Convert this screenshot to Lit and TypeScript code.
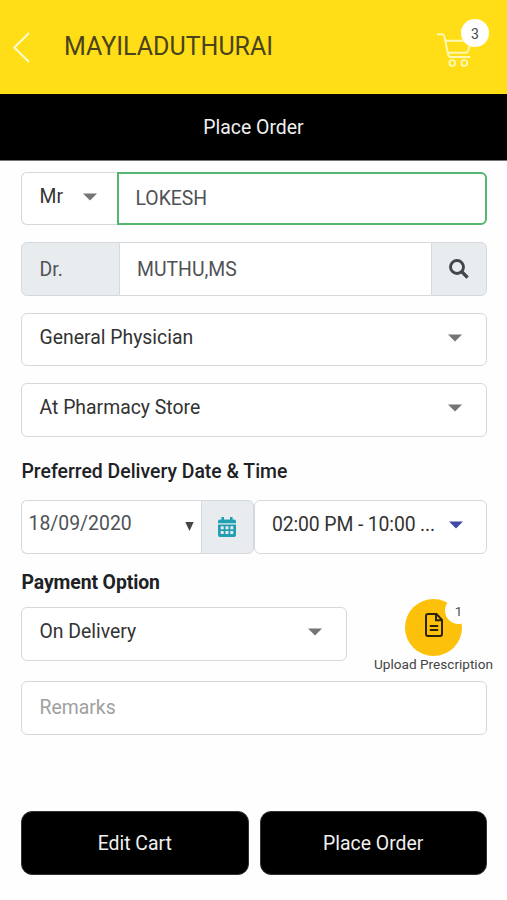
import { LitElement, html, css, svg } from "lit";
import { customElement } from "lit/decorators.js";

const calendarDots = [0, 1, 2].flatMap((col) =>
  [0, 1].map((row) => svg`<rect x=${2.7 + col * 4.8} y=${9.2 + row * 4.9} width="3" height="3" rx=".5" fill="#e9ecef"/>`)
);

@customElement("app-root")
export class AppRoot extends LitElement {
  static styles = css`
    :host {
      display: flex;
      flex-direction: column;
      width: 507px;
      height: 900px;
      overflow: hidden;
      background: #fefefe;
      color: #333;
      font: 19.4px/24px Roboto, sans-serif;
    }
    * { box-sizing: border-box; }
    svg { display: block; flex: none; }
    .header {
      flex: none;
      display: flex;
      height: 94px;
      padding: 0 18px 0 12px;
      background: #ffde17;
    }
    .back { margin-top: 31px; }
    .store {
      margin: 32px 0 0 33px;
      font-size: 25px;
      line-height: 30px;
      color: #4a431b;
      white-space: nowrap;
    }
    .cart { position: relative; margin: 32px 0 0 auto; width: 53px; }
    .count {
      position: absolute;
      left: 25px;
      top: -13px;
      width: 28px;
      height: 28px;
      border-radius: 50%;
      background: #fff;
      color: #484848;
      font-size: 14px;
      line-height: 30px;
      text-align: center;
    }
    .bar {
      flex: none;
      height: 67px;
      border-bottom: 1px solid #77757a;
      background: #000;
      color: #f0f0f0;
      line-height: 67px;
      text-align: center;
    }
    .form { display: flex; flex-direction: column; padding: 10.6px 20px 0 21px; }
    .row { display: flex; height: 53.6px; margin-bottom: 16.9px; }
    .box {
      display: flex;
      align-items: center;
      justify-content: space-between;
      border: 1.5px solid #d5d8dc;
      border-radius: 6px;
      padding: 0 24px 0 17.5px;
      background: #fff;
      white-space: nowrap;
    }
    .grow { flex: 1; min-width: 0; }
    .up { padding-bottom: 3px; }
    .input { color: #4f5256; padding-top: 1.6px; }
    .title { width: 96px; padding-right: 20.5px; border-right: 0; border-radius: 6px 0 0 6px; }
    .valid { border: 2px solid #55b672; border-radius: 0 6px 6px 0; padding-left: 16.5px; }
    .addon { background: #e9ecef; }
    .prefix { width: 98.5px; border-radius: 6px 0 0 6px; }
    .mid { border-width: 1.5px 0; border-radius: 0; padding-left: 17.5px; }
    .search { width: 56px; padding: 0 1px 0 0; justify-content: center; border-radius: 0 6px 6px 0; }
    .date { width: 179.5px; padding: 0 6.5px 6px 6.5px; border-right: 0; border-radius: 6px 0 0 6px; }
    .date svg { margin-top: 5px; }
    .calendar { width: 53.5px; padding: 0; justify-content: center; border-radius: 0 6px 6px 0; }
    .slot { letter-spacing: -0.13px; padding: 0 23.5px 4px 17px; }
    .heading { color: #202124; font-weight: 500; white-space: nowrap; }
    .when { margin: 6px 0 16.6px; padding-left: 0.5px; }
    .pay { margin: 1px 0 12.4px; padding-left: 0.5px; font-weight: 700; letter-spacing: -0.1px; }
    .dates { margin-bottom: 16.3px; }
    .payment { justify-content: space-between; margin-bottom: 20.4px; }
    .method { width: 326px; padding-bottom: 4px; }
    .upload { width: 120px; margin: -8.4px -6.5px 0 0; display: flex; flex-direction: column; align-items: center; }
    .disc {
      position: relative;
      flex: none;
      display: flex;
      align-items: center;
      justify-content: center;
      width: 57px;
      height: 57px;
      border-radius: 50%;
      background: #fdc10b;
    }
    .disc svg { margin-top: -6px; }
    .files {
      position: absolute;
      right: -10px;
      top: -2px;
      width: 27px;
      height: 27px;
      border-radius: 50%;
      background: #fefefe;
      color: #505050;
      font-size: 13.5px;
      line-height: 29px;
      text-align: center;
    }
    .caption { font-size: 13.6px; line-height: 17px; color: #444; white-space: nowrap; }
    .remarks { color: #a0a0a0; }
    .actions { display: flex; gap: 11px; margin-top: 59.5px; }
    .button {
      flex: 1;
      height: 64px;
      padding: 1.5px 0 0;
      border: 1px solid #333;
      border-radius: 11px;
      background: #000;
      color: #f0f0f0;
      font: inherit;
    }
  `;

  arrow(color = "#757575") {
    return html`<svg width="14" height="8" viewBox="0 0 14 8"><path d="M0 .5H14L7 7.5Z" fill=${color} /></svg>`;
  }

  render() {
    return html`
      <header class="header">
        <svg class="back" width="19" height="33" viewBox="0 0 19 33">
          <path d="M17 2 2.3 16.5 17 31" fill="none" stroke="#fffbd0" stroke-width="2" />
        </svg>
        <div class="store">MAYILADUTHURAI</div>
        <div class="cart">
          <svg width="37" height="36" viewBox="0 0 37 36" fill="none" stroke="#fff8b5" stroke-width="1.9" stroke-linecap="round" stroke-linejoin="round">
            <path d="M1.8 2.3H5.5Q7.8 2.3 8.3 4.5L12.2 22.5Q12.7 25 15 25H33.5M9.5 8.8H35L32.3 18.5Q31.5 20.8 29.5 20.8H12" />
            <circle cx="16.3" cy="31" r="2.9" />
            <circle cx="28.3" cy="31" r="2.9" />
          </svg>
          <span class="count">3</span>
        </div>
      </header>
      <div class="bar">Place Order</div>
      <main class="form">
        <div class="row">
          <div class="box title up">Mr ${this.arrow()}</div>
          <div class="box grow input valid">LOKESH</div>
        </div>
        <div class="row">
          <div class="box input addon prefix">Dr.</div>
          <div class="box input grow mid">MUTHU,MS</div>
          <div class="box addon search">
            <svg width="20" height="20" viewBox="0 0 20 20" fill="none" stroke="#43474b">
              <circle cx="8" cy="8" r="6.5" stroke-width="2.9" />
              <path d="M12.8 12.8 18.6 18.6" stroke-width="3.4" />
            </svg>
          </div>
        </div>
        <div class="row"><div class="box grow up">General Physician ${this.arrow()}</div></div>
        <div class="row"><div class="box grow up">At Pharmacy Store ${this.arrow()}</div></div>
        <div class="heading when">Preferred Delivery Date &amp; Time</div>
        <div class="row dates">
          <div class="box input date">
            18/09/2020
            <svg width="9" height="9" viewBox="0 0 9 9"><path d="M.3 0H8.7L4.5 9Z" fill="#444" /></svg>
          </div>
          <div class="box addon calendar">
            <svg width="18" height="20" viewBox="0 0 18 20" fill="#229fb3">
              <path d="M3.4 0H6V2.5H12V0H14.6V2.5H16Q18 2.5 18 4.5V6.2H0V4.5Q0 2.5 2 2.5H3.4Z" />
              <path d="M0 7.4H18V18Q18 20 16 20H2Q0 20 0 18Z" />
              ${calendarDots}
            </svg>
          </div>
          <div class="box grow slot">02:00 PM - 10:00 ... ${this.arrow("#3f49a8")}</div>
        </div>
        <div class="heading pay">Payment Option</div>
        <div class="row payment">
          <div class="box method">On Delivery ${this.arrow()}</div>
          <div class="upload">
            <div class="disc">
              <svg width="18" height="24" viewBox="0 0 18 24" fill="none" stroke="#2b230b" stroke-width="2">
                <path d="M3 1H11.5L17 6.8V21Q17 23 15 23H3Q1 23 1 21V3Q1 1 3 1ZM11 1V7.3H17M4.8 13H13.2M4.8 17H13.2" />
              </svg>
              <span class="files">1</span>
            </div>
            <div class="caption">Upload Prescription</div>
          </div>
        </div>
        <div class="row"><div class="box grow remarks">Remarks</div></div>
        <div class="actions">
          <button class="button">Edit Cart</button>
          <button class="button">Place Order</button>
        </div>
      </main>
    `;
  }
}
